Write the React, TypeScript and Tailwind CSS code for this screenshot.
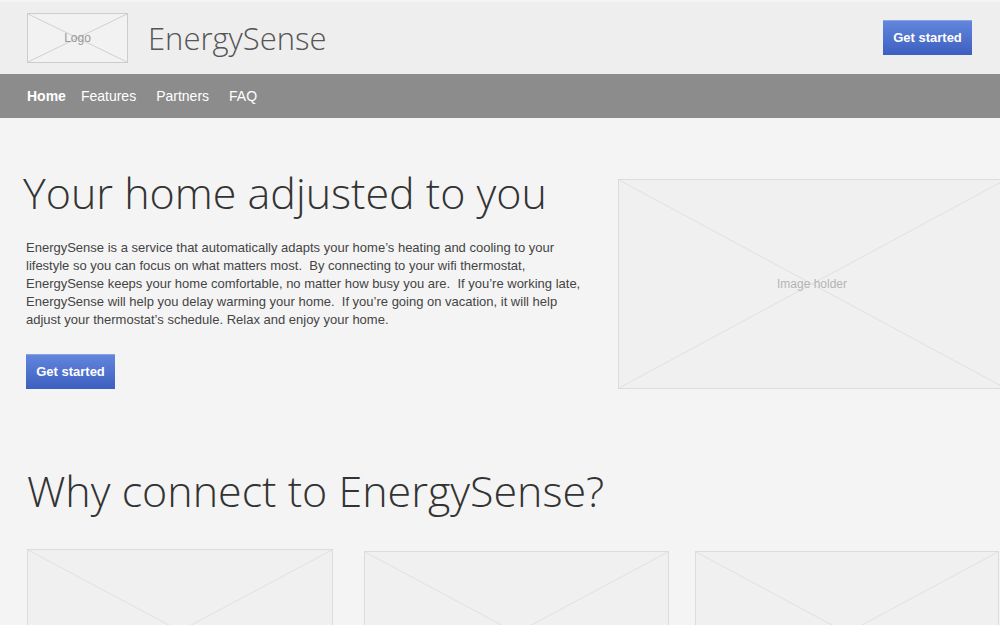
import React from 'react';

const sans = "font-['Liberation_Sans',Arial,sans-serif]";
const light = "font-['Open_Sans',sans-serif] font-light";

function Placeholder({ label, className }: { label?: string; className?: string }) {
  return (
    <div className={`relative bg-[#f0f0f0] border border-[#dcdcdc] ${className ?? ''}`}>
      <svg className="absolute inset-0 h-full w-full" preserveAspectRatio="none" viewBox="0 0 100 100">
        <line x1="0" y1="0" x2="100" y2="100" stroke="#e0e0e0" strokeWidth="1" vectorEffect="non-scaling-stroke" />
        <line x1="100" y1="0" x2="0" y2="100" stroke="#e0e0e0" strokeWidth="1" vectorEffect="non-scaling-stroke" />
      </svg>
      {label && (
        <span className={`absolute inset-0 flex items-center justify-center text-[12px] text-[#b4b4b4] ${sans}`}>
          {label}
        </span>
      )}
    </div>
  );
}

function StartButton({ className }: { className?: string }) {
  return (
    <button
      className={`h-[35px] w-[89px] bg-gradient-to-b from-[#6286dc] to-[#3d5fc0] border-t border-[#8aa3e4] text-[13px] font-bold text-white ${sans} ${className ?? ''}`}
    >
      Get started
    </button>
  );
}

export default function App() {
  return (
    <div className="h-[625px] w-[1000px] overflow-hidden bg-[#f4f4f4] pt-[2px]">
      {/* Header */}
      <header className="flex h-[72px] items-center justify-between bg-[#eeeeee] pl-[27px] pr-[28px]">
        <div className="flex items-center">
          <div className="relative h-[50px] w-[101px] border border-[#cccccc] bg-[#f2f2f2] mt-[-1px]">
            <svg className="absolute inset-0 h-full w-full" preserveAspectRatio="none" viewBox="0 0 100 100">
              <line x1="0" y1="0" x2="100" y2="100" stroke="#d0d0d0" strokeWidth="1" vectorEffect="non-scaling-stroke" />
              <line x1="100" y1="0" x2="0" y2="100" stroke="#d0d0d0" strokeWidth="1" vectorEffect="non-scaling-stroke" />
            </svg>
            <span className={`absolute inset-0 flex items-center justify-center text-[12px] text-[#999] ${sans}`}>Logo</span>
          </div>
          <span className={`ml-[20px] text-[31px] leading-none text-[#555] ${light}`}>EnergySense</span>
        </div>
        <StartButton className="mt-[-1px]" />
      </header>

      {/* Nav */}
      <nav className={`flex h-[44px] items-center bg-[#8c8c8c] pl-[27px] text-[14px] text-white ${sans}`}>
        <a className="mr-[15px] font-bold">Home</a>
        <a className="mr-[20px]">Features</a>
        <a className="mr-[20px]">Partners</a>
        <a>FAQ</a>
      </nav>

      {/* Hero */}
      <section className="flex items-start pt-[49px]">
        <div className="w-[615px] shrink-0 pl-[23px] pr-[23px]">
          <h1 className={`text-[43px] leading-[52px] text-[#333] ${light}`}>Your home adjusted to you</h1>
          <p className={`mt-[20px] pl-[3px] text-[13px] leading-[18px] text-[#444] ${sans}`}>
            EnergySense is a service that automatically adapts your home’s heating and cooling to your lifestyle so you
            can focus on what matters most.&nbsp; By connecting to your wifi thermostat, EnergySense keeps your home
            comfortable, no matter how busy you are.&nbsp; If you’re working late, EnergySense will help you delay
            warming your home.&nbsp; If you’re going on vacation, it will help adjust your thermostat’s schedule. Relax
            and enjoy your home.
          </p>
          <StartButton className="ml-[3px] mt-[25px]" />
        </div>
        <Placeholder label="Image holder" className="ml-[3px] mt-[12px] h-[210px] w-[388px] shrink-0" />
      </section>

      {/* Why */}
      <section className="mt-[74px] pl-[27px]">
        <h2 className={`text-[43px] leading-[56px] text-[#333] ${light}`}>Why connect to EnergySense?</h2>
        <div className="mt-[30px] flex items-start">
          <Placeholder className="h-[164px] w-[306px] shrink-0" />
          <Placeholder className="ml-[31px] mt-[2px] h-[164px] w-[305px] shrink-0" />
          <Placeholder className="ml-[26px] mt-[2px] h-[164px] w-[304px] shrink-0" />
        </div>
      </section>
    </div>
  );
}
